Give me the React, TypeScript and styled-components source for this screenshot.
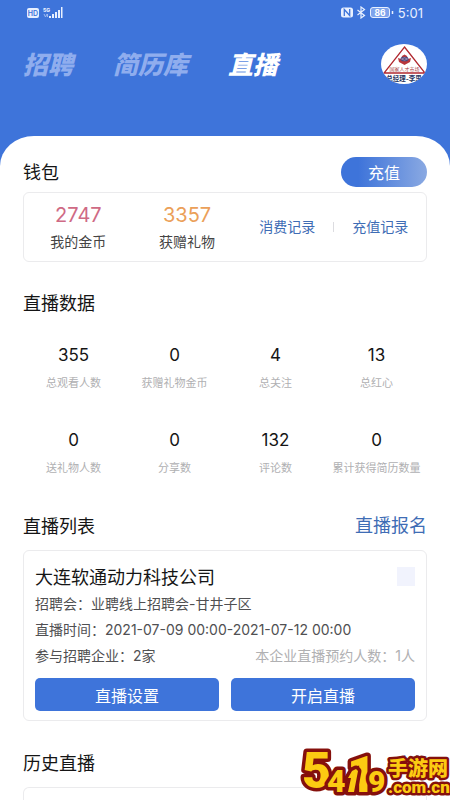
import React from "react";
import styled, { createGlobalStyle } from "styled-components";

const BLUE = "#3e74da";

const GlobalStyle = createGlobalStyle`
  *, *::before, *::after { box-sizing: border-box; }
  body {
    margin: 0;
    background: #fff;
    font-family: Inter, "Noto Sans CJK SC", sans-serif;
    color: #151515;
  }
  h1, h2, h3, p, dl, dd { margin: 0; font-weight: 400; }
  button { font: inherit; border: 0; padding: 0; cursor: pointer; }
  a { text-decoration: none; }
`;

const Page = styled.div`
  position: relative;
  display: flex;
  flex-direction: column;
  min-height: 100vh;
  overflow: hidden;
  background: linear-gradient(${BLUE} 200px, #fff 200px);
`;

const StatusBar = styled.div`
  display: flex;
  align-items: center;
  justify-content: space-between;
  height: 25px;
  padding: 0 27px;
  color: #e8f0ff;
  font-size: 13px;
`;

const StatusGroup = styled.div`
  display: flex;
  align-items: center;
  gap: 4px;
`;

const Header = styled.header`
  display: flex;
  align-items: center;
  justify-content: space-between;
  height: 111px;
  padding: 0 23px 34px;
`;

const Tabs = styled.nav`
  display: flex;
  gap: 40px;
  padding-top: 2px;
`;

const Tab = styled.button<{ $active?: boolean }>`
  background: none;
  color: ${(p) => (p.$active ? "#fff" : "#8fadee")};
  font-size: 25px;
  line-height: 32px;
  font-weight: 900;
  font-style: italic;
`;

const Avatar = styled.button`
  width: 46px;
  height: 40px;
  border-radius: 50%;
  overflow: hidden;
  background: #fff;
  svg { display: block; }
`;

const Sheet = styled.main`
  flex: 1;
  display: flex;
  flex-direction: column;
  padding: 20px 23px 0;
  background: #fff;
  border-radius: 34px 34px 0 0 / 30px 30px 0 0;
`;

const SectionHead = styled.div<{ $top?: number }>`
  display: flex;
  align-items: center;
  justify-content: space-between;
  height: 32px;
  margin-top: ${(p) => p.$top ?? 0}px;
`;

const SectionTitle = styled.h2`
  padding-top: 2px;
  font-size: 18px;
  line-height: 26px;
`;

const TopUp = styled.button`
  width: 86px;
  height: 30px;
  border-radius: 15px;
  color: #fff;
  font-size: 16px;
  background: linear-gradient(90deg, ${BLUE} 20%, #8aa9e2);
`;

const TextLink = styled.a<{ $size: number }>`
  color: #3f6db5;
  font-size: ${(p) => p.$size}px;
  line-height: 26px;
`;

const Card = styled.section`
  border: 1px solid #ebebed;
  border-radius: 6px;
`;

const Wallet = styled(Card)`
  display: flex;
  align-items: center;
  height: 70px;
  margin-top: 4px;
`;

const Balance = styled.dl`
  display: flex;
  flex: 109;
  flex-direction: column-reverse;
  align-items: center;
  gap: 5px;
`;

const BalanceValue = styled.dd<{ $color: string }>`
  color: ${(p) => p.$color};
  font-size: 20px;
  line-height: 24px;
`;

const BalanceLabel = styled.dt`
  color: #444;
  font-size: 14px;
  line-height: 20px;
`;

const WalletLinks = styled.div`
  display: flex;
  flex: 185;
  align-items: center;
  justify-content: center;
  gap: 18px;
`;

const Divider = styled.span`
  width: 1px;
  height: 10px;
  background: #dcdce0;
`;

const Stats = styled.div`
  display: grid;
  grid-template-columns: repeat(4, 1fr);
  row-gap: 38px;
  margin-top: 26px;
`;

const Stat = styled.dl`
  display: flex;
  flex-direction: column-reverse;
  align-items: center;
  gap: 9px;
`;

const StatValue = styled.dd`
  font-size: 17px;
  line-height: 20px;
`;

const StatLabel = styled.dt`
  color: #b0b0b2;
  font-size: 11px;
  line-height: 18px;
  white-space: nowrap;
`;

const LiveCard = styled(Card)`
  margin-top: 8px;
  padding: 11px 11px 9px;
`;

const LiveHead = styled.div`
  display: flex;
  align-items: center;
  justify-content: space-between;
  height: 29px;
`;

const Company = styled.h3`
  padding-top: 2px;
  font-size: 18px;
  line-height: 28px;
`;

const Placeholder = styled.span`
  width: 18px;
  height: 19px;
  background: #f1f3fd;
`;

const Line = styled.p`
  display: flex;
  justify-content: space-between;
  color: #505052;
  font-size: 14px;
  line-height: 26px;
`;

const Muted = styled.span`
  color: #b0b0b2;
`;

const Actions = styled.div`
  display: grid;
  grid-template-columns: 1fr 1fr;
  gap: 12px;
  margin-top: 9px;
`;

const Action = styled.button`
  height: 33px;
  border-radius: 5px;
  background: ${BLUE};
  color: #fff;
  font-size: 16px;
`;

const HistoryCard = styled(Card)`
  flex: 1;
  min-height: 12px;
  margin-top: 8px;
  border-bottom: 0;
  border-radius: 6px 6px 0 0;
`;

const SiteBadge = styled.svg`
  position: absolute;
  right: 0;
  bottom: 0;
`;

const wallet = [
  { label: "我的金币", value: "2747", color: "#cf6a85" },
  { label: "获赠礼物", value: "3357", color: "#eba059" },
];

const stats = [
  ["总观看人数", "355"],
  ["获赠礼物金币", "0"],
  ["总关注", "4"],
  ["总红心", "13"],
  ["送礼物人数", "0"],
  ["分享数", "0"],
  ["评论数", "132"],
  ["累计获得简历数量", "0"],
];

const SignalIcons = () => (
  <svg width="36" height="12" viewBox="0 0 36 12" fill="#e8f0ff">
    <rect x="0" y="1" width="12" height="10" rx="2" />
    <text x="6" y="9" fontSize="7" fontWeight="600" textAnchor="middle" fill={BLUE}>HD</text>
    <text x="16" y="5" fontSize="5" fontWeight="800">5G</text>
    <path d="M17 7l1.500 3 1.500-3M20.500 10V7" stroke="#9dbaf0" strokeWidth="1" fill="none" />
    <rect x="22" y="9" width="2" height="2" />
    <rect x="25" y="7" width="2" height="4" />
    <rect x="28" y="5" width="2" height="6" />
    <rect x="31" y="3" width="2" height="8" />
    <rect x="34" y="0" width="1.500" height="11" />
  </svg>
);

const DeviceIcons = () => (
  <svg width="53" height="13" viewBox="0 0 53 13" fill="none" stroke="#e8f0ff">
    <rect x="0" y="1.500" width="12" height="10" rx="2.500" fill="#e8f0ff" stroke="none" />
    <path d="M3.300 10V3.500l5.400 6V3" stroke={BLUE} strokeWidth="1.300" />
    <path d="M16.500 4l7 5.500-3.500 2.500V1l3.500 2.500-7 5.500" strokeWidth="1.200" />
    <rect x="29.500" y="1.500" width="19" height="10" rx="2.500" fill="#7ea3ec" />
    <path d="M51.500 5v3" strokeWidth="1.500" />
    <text x="39" y="9.500" fontSize="8.500" fontWeight="700" textAnchor="middle" fill="#fff" stroke="none">86</text>
  </svg>
);

const AvatarArt = () => (
  <svg width="46" height="40" viewBox="0 0 46 40">
    <path d="M23.500 3L44 29H3z" fill="#fff" stroke="#b0282f" strokeWidth="1.300" />
    <path d="M17 14l3 1 1-3 2.500-1.500L26 12l1 3 3-1-1 4-5.500 3L18 18z" fill="#b8373c" />
    <ellipse cx="23.500" cy="15" rx="4" ry="2.300" fill="#414b86" />
    <path d="M20.500 15q3-2.500 6 0q-3 2.500-6 0" fill="none" stroke="#d9a9b3" strokeWidth="0.600" />
    <text x="23.500" y="27" fontSize="5" textAnchor="middle" fill="#a8444a">国家人才市场</text>
    <text x="23" y="36.500" fontSize="6.500" fontWeight="700" textAnchor="middle" fill="#26345f">总经理-李思</text>
  </svg>
);

const Badge = () => (
  <SiteBadge
    width="152"
    height="56"
    viewBox="0 0 152 56"
    fill="#fccb12"
    stroke="#85100c"
    strokeLinejoin="round"
    strokeWidth="7"
    paintOrder="stroke"
    fontFamily="Roboto, 'Noto Sans CJK SC', sans-serif"
    fontWeight="900"
    aria-label="5419手游网"
  >
    <text x="4" y="44" fontSize="50">5</text>
    <text x="29" y="48" fontSize="32">4</text>
    <text x="49" y="48" fontSize="50">1</text>
    <path d="M54 27l4-2 2 2-4 21h-6l3-14h-3z" />
    <text x="70" y="48" fontSize="30">9</text>
    <g strokeWidth="5">
      <text x="90" y="32" fontSize="20">手游网</text>
      <text x="90" y="49" fontSize="17">.com.cn</text>
    </g>
  </SiteBadge>
);

export default function App() {
  return (
    <>
      <GlobalStyle />
      <Page>
        <StatusBar>
          <SignalIcons />
          <StatusGroup>
            <DeviceIcons />
            <span>5:01</span>
          </StatusGroup>
        </StatusBar>
        <Header>
          <Tabs>
            <Tab>招聘</Tab>
            <Tab>简历库</Tab>
            <Tab $active aria-current="page">直播</Tab>
          </Tabs>
          <Avatar aria-label="个人中心">
            <AvatarArt />
          </Avatar>
        </Header>
        <Sheet>
          <SectionHead>
            <SectionTitle>钱包</SectionTitle>
            <TopUp>充值</TopUp>
          </SectionHead>
          <Wallet>
            {wallet.map((b) => (
              <Balance key={b.label}>
                <BalanceLabel>{b.label}</BalanceLabel>
                <BalanceValue $color={b.color}>{b.value}</BalanceValue>
              </Balance>
            ))}
            <WalletLinks>
              <TextLink href="#spend" $size={14}>消费记录</TextLink>
              <Divider />
              <TextLink href="#topup" $size={14}>充值记录</TextLink>
            </WalletLinks>
          </Wallet>

          <SectionHead $top={25}>
            <SectionTitle>直播数据</SectionTitle>
          </SectionHead>
          <Stats>
            {stats.map(([label, value]) => (
              <Stat key={label}>
                <StatLabel>{label}</StatLabel>
                <StatValue>{value}</StatValue>
              </Stat>
            ))}
          </Stats>

          <SectionHead $top={33}>
            <SectionTitle>直播列表</SectionTitle>
            <TextLink href="#signup" $size={18}>直播报名</TextLink>
          </SectionHead>
          <LiveCard>
            <LiveHead>
              <Company>大连软通动力科技公司</Company>
              <Placeholder />
            </LiveHead>
            <Line>招聘会：业聘线上招聘会-甘井子区</Line>
            <Line>直播时间：2021-07-09 00:00-2021-07-12 00:00</Line>
            <Line>
              <span>参与招聘企业：2家</span>
              <Muted>本企业直播预约人数：1人</Muted>
            </Line>
            <Actions>
              <Action>直播设置</Action>
              <Action>开启直播</Action>
            </Actions>
          </LiveCard>

          <SectionHead $top={26}>
            <SectionTitle>历史直播</SectionTitle>
            <TextLink href="#history" $size={15}>全部</TextLink>
          </SectionHead>
          <HistoryCard />
        </Sheet>
        <Badge />
      </Page>
    </>
  );
}
